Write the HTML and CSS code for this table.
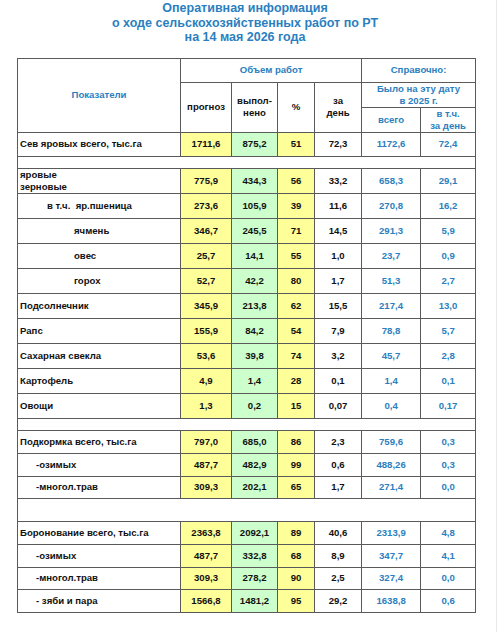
FILE: index.html
```html
<!DOCTYPE html>
<html lang="ru">
<head>
    <meta charset="UTF-8">
    <meta name="viewport" content="width=device-width, initial-scale=1.0">
    <title>Оперативная информация</title>
    <link rel="stylesheet" href="styles.css">
</head>
<body>
    <div class="page">
        <h1 class="title">Оперативная информация<br>о ходе сельскохозяйственных работ по РТ<br>на 14 мая 2026 года</h1>

        <table class="report">
            <colgroup>
                <col class="c-name">
                <col class="c-plan">
                <col class="c-done">
                <col class="c-pct">
                <col class="c-day">
                <col class="c-prev">
                <col class="c-prevday">
            </colgroup>
            <tr class="h1">
                <th rowspan="3" class="blue">Показатели</th>
                <th colspan="4" class="blue">Объем работ</th>
                <th colspan="2" class="blue">Справочно:</th>
            </tr>
            <tr class="h2">
                <th rowspan="2">прогноз</th>
                <th rowspan="2">выпол-<br>нено</th>
                <th rowspan="2">%</th>
                <th rowspan="2">за<br>день</th>
                <th colspan="2" class="blue">Было на эту дату<br>в 2025 г.</th>
            </tr>
            <tr class="h3">
                <th class="blue">всего</th>
                <th class="blue">в т.ч.<br>за день</th>
            </tr>

            <tr class="r24">
                <td class="name">Сев яровых всего, тыс.га</td>
                <td class="yellow">1711,6</td><td class="green">875,2</td><td class="yellow">51</td><td>72,3</td>
                <td class="blue">1172,6</td><td class="blue">72,4</td>
            </tr>
            <tr class="gap"><td colspan="7"></td></tr>
            <tr class="r25">
                <td class="name">яровые<br>зерновые</td>
                <td class="yellow">775,9</td><td class="green">434,3</td><td class="yellow">56</td><td>33,2</td>
                <td class="blue">658,3</td><td class="blue">29,1</td>
            </tr>
            <tr class="r25">
                <td class="name sub1">в т.ч.&nbsp; яр.пшеница</td>
                <td class="yellow">273,6</td><td class="green">105,9</td><td class="yellow">39</td><td>11,6</td>
                <td class="blue">270,8</td><td class="blue">16,2</td>
            </tr>
            <tr class="r25">
                <td class="name sub2">ячмень</td>
                <td class="yellow">346,7</td><td class="green">245,5</td><td class="yellow">71</td><td>14,5</td>
                <td class="blue">291,3</td><td class="blue">5,9</td>
            </tr>
            <tr class="r25">
                <td class="name sub2">овес</td>
                <td class="yellow">25,7</td><td class="green">14,1</td><td class="yellow">55</td><td>1,0</td>
                <td class="blue">23,7</td><td class="blue">0,9</td>
            </tr>
            <tr class="r25">
                <td class="name sub2">горох</td>
                <td class="yellow">52,7</td><td class="green">42,2</td><td class="yellow">80</td><td>1,7</td>
                <td class="blue">51,3</td><td class="blue">2,7</td>
            </tr>
            <tr class="r25">
                <td class="name">Подсолнечник</td>
                <td class="yellow">345,9</td><td class="green">213,8</td><td class="yellow">62</td><td>15,5</td>
                <td class="blue">217,4</td><td class="blue">13,0</td>
            </tr>
            <tr class="r25">
                <td class="name">Рапс</td>
                <td class="yellow">155,9</td><td class="green">84,2</td><td class="yellow">54</td><td>7,9</td>
                <td class="blue">78,8</td><td class="blue">5,7</td>
            </tr>
            <tr class="r25">
                <td class="name">Сахарная свекла</td>
                <td class="yellow">53,6</td><td class="green">39,8</td><td class="yellow">74</td><td>3,2</td>
                <td class="blue">45,7</td><td class="blue">2,8</td>
            </tr>
            <tr class="r25">
                <td class="name">Картофель</td>
                <td class="yellow">4,9</td><td class="green">1,4</td><td class="yellow">28</td><td>0,1</td>
                <td class="blue">1,4</td><td class="blue">0,1</td>
            </tr>
            <tr class="r25">
                <td class="name">Овощи</td>
                <td class="yellow">1,3</td><td class="green">0,2</td><td class="yellow">15</td><td>0,07</td>
                <td class="blue">0,4</td><td class="blue">0,17</td>
            </tr>
            <tr class="gap"><td colspan="7"></td></tr>
            <tr class="r23">
                <td class="name">Подкормка всего, тыс.га</td>
                <td class="yellow">797,0</td><td class="green">685,0</td><td class="yellow">86</td><td>2,3</td>
                <td class="blue">759,6</td><td class="blue">0,3</td>
            </tr>
            <tr class="r23">
                <td class="name sub3">-озимых</td>
                <td class="yellow">487,7</td><td class="green">482,9</td><td class="yellow">99</td><td>0,6</td>
                <td class="blue">488,26</td><td class="blue">0,3</td>
            </tr>
            <tr class="r22">
                <td class="name sub3">-многол.трав</td>
                <td class="yellow">309,3</td><td class="green">202,1</td><td class="yellow">65</td><td>1,7</td>
                <td class="blue">271,4</td><td class="blue">0,0</td>
            </tr>
            <tr class="gap-lg"><td colspan="7"></td></tr>
            <tr class="r23">
                <td class="name">Боронование всего, тыс.га</td>
                <td class="yellow">2363,8</td><td class="green">2092,1</td><td class="yellow">89</td><td>40,6</td>
                <td class="blue">2313,9</td><td class="blue">4,8</td>
            </tr>
            <tr class="r23">
                <td class="name sub3">-озимых</td>
                <td class="yellow">487,7</td><td class="green">332,8</td><td class="yellow">68</td><td>8,9</td>
                <td class="blue">347,7</td><td class="blue">4,1</td>
            </tr>
            <tr class="r22">
                <td class="name sub3">-многол.трав</td>
                <td class="yellow">309,3</td><td class="green">278,2</td><td class="yellow">90</td><td>2,5</td>
                <td class="blue">327,4</td><td class="blue">0,0</td>
            </tr>
            <tr class="r23">
                <td class="name sub3">- зяби и пара</td>
                <td class="yellow">1566,8</td><td class="green">1481,2</td><td class="yellow">95</td><td>29,2</td>
                <td class="blue">1638,8</td><td class="blue">0,6</td>
            </tr>
        </table>
    </div>
</body>
</html>
```

FILE: styles.css
```css
body {
    margin: 0;
    padding: 0;
    background-color: #fff;
    font-family: "Liberation Sans", Arial, sans-serif;
    color: #111;
}
.page {
    width: 497px;
    height: 632px;
    border-right: 1px solid #e8e8e8;
    box-sizing: border-box;
    padding-top: 1px;
}
.title {
    margin: 0 0 13px 0;
    text-align: center;
    font-size: 12.5px;
    line-height: 14.5px;
    font-weight: bold;
    color: #2b7fc0;
    padding-right: 6px;
}
.report {
    margin-left: 17px;
    width: 458px;
    border-collapse: collapse;
    table-layout: fixed;
    font-size: 9.6px;
    font-weight: bold;
}
.c-name { width: 163px; }
.c-plan { width: 51px; }
.c-done { width: 46px; }
.c-pct { width: 37px; }
.c-day { width: 47px; }
.c-prev { width: 59px; }
.c-prevday { width: 55px; }
.report th,
.report td {
    border: 1px solid #5a5a5a;
    padding: 0 2px;
    text-align: center;
    vertical-align: middle;
    line-height: 12px;
}
.report th {
    font-weight: bold;
}
.h1 th { height: 23px; }
.h2 th { height: 23px; }
.h3 th { height: 21px; }
.r24 td { height: 23px; }
.r25 td { height: 24px; }
.r23 td { height: 22px; }
.r22 td { height: 21px; }
.gap td { height: 11px; border-left: 1px solid #5a5a5a; border-right: 1px solid #5a5a5a; }
.gap-lg td { height: 22px; }
.report .name {
    text-align: left;
    padding-left: 2px;
}
.sub1 { padding-left: 29px !important; }
.sub2 { padding-left: 56px !important; }
.sub3 { padding-left: 18px !important; }
.blue {
    color: #2b7fc0;
}
.yellow {
    background-color: #ffff99;
}
.green {
    background-color: #ccffcc;
}
```
